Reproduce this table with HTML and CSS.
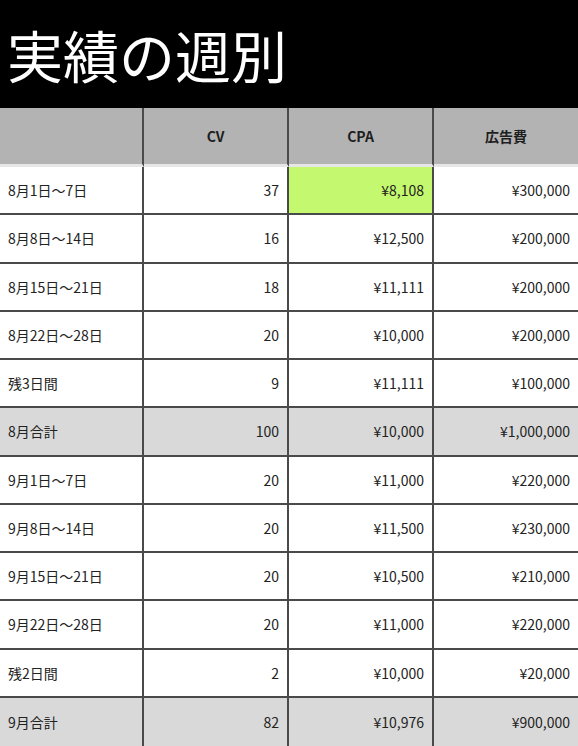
FILE: index.html
```html
<!DOCTYPE html>
<html lang="ja">
<head>
<meta charset="utf-8">
<link rel="stylesheet" href="styles.css">
</head>
<body>
<div class="page">
  <h1 class="title">実績の週別</h1>
  <div class="table">
    <div class="cell head"></div>
    <div class="cell head">CV</div>
    <div class="cell head">CPA</div>
    <div class="cell head last">広告費</div>

    <div class="cell label">8月1日～7日</div>
    <div class="cell num">37</div>
    <div class="cell num good">¥8,108</div>
    <div class="cell num last">¥300,000</div>

    <div class="cell label">8月8日～14日</div>
    <div class="cell num">16</div>
    <div class="cell num">¥12,500</div>
    <div class="cell num last">¥200,000</div>

    <div class="cell label">8月15日～21日</div>
    <div class="cell num">18</div>
    <div class="cell num">¥11,111</div>
    <div class="cell num last">¥200,000</div>

    <div class="cell label">8月22日～28日</div>
    <div class="cell num">20</div>
    <div class="cell num">¥10,000</div>
    <div class="cell num last">¥200,000</div>

    <div class="cell label">残3日間</div>
    <div class="cell num">9</div>
    <div class="cell num">¥11,111</div>
    <div class="cell num last">¥100,000</div>

    <div class="cell label total">8月合計</div>
    <div class="cell num total">100</div>
    <div class="cell num total">¥10,000</div>
    <div class="cell num total last">¥1,000,000</div>

    <div class="cell label">9月1日～7日</div>
    <div class="cell num">20</div>
    <div class="cell num">¥11,000</div>
    <div class="cell num last">¥220,000</div>

    <div class="cell label">9月8日～14日</div>
    <div class="cell num">20</div>
    <div class="cell num">¥11,500</div>
    <div class="cell num last">¥230,000</div>

    <div class="cell label">9月15日～21日</div>
    <div class="cell num">20</div>
    <div class="cell num">¥10,500</div>
    <div class="cell num last">¥210,000</div>

    <div class="cell label">9月22日～28日</div>
    <div class="cell num">20</div>
    <div class="cell num">¥11,000</div>
    <div class="cell num last">¥220,000</div>

    <div class="cell label">残2日間</div>
    <div class="cell num">2</div>
    <div class="cell num">¥10,000</div>
    <div class="cell num last">¥20,000</div>

    <div class="cell label total end">9月合計</div>
    <div class="cell num total end">82</div>
    <div class="cell num total end">¥10,976</div>
    <div class="cell num total last end">¥900,000</div>
  </div>
</div>
</body>
</html>
```

FILE: styles.css
```css
html, body {
  margin: 0;
  padding: 0;
  background: #ffffff;
}
.page {
  width: 578px;
  height: 746px;
  overflow: hidden;
  font-family: "Noto Sans CJK JP", "Noto Sans", sans-serif;
}
.title {
  margin: 0;
  height: 108px;
  background: #000000;
  color: #ffffff;
  font-size: 56px;
  font-weight: 400;
  line-height: 108px;
  padding-left: 7px;
  box-sizing: border-box;
}
.table {
  display: grid;
  grid-template-columns: 144px 145px 145px 144px;
  grid-template-rows: 59px repeat(12, 1fr);
  height: 638px;
}
.cell {
  display: flex;
  align-items: center;
  font-size: 14px;
  color: #222222;
  border-right: 2px solid #4a4a4a;
  border-bottom: 2px solid #4a4a4a;
  box-sizing: border-box;
  background: #ffffff;
}
.cell.last {
  border-right: none;
}
.cell.end {
  border-bottom: none;
}
.head {
  background: #b3b3b3;
  justify-content: center;
  font-size: 14px;
  font-weight: 700;
  color: #1e1e1e;
  border-bottom: 3px solid #e6e6e6;
}
.label {
  padding-left: 8px;
}
.num {
  justify-content: flex-end;
  padding-right: 8px;
}
.total {
  background: #d9d9d9;
}
.good {
  background: #c4f86e;
}
```
